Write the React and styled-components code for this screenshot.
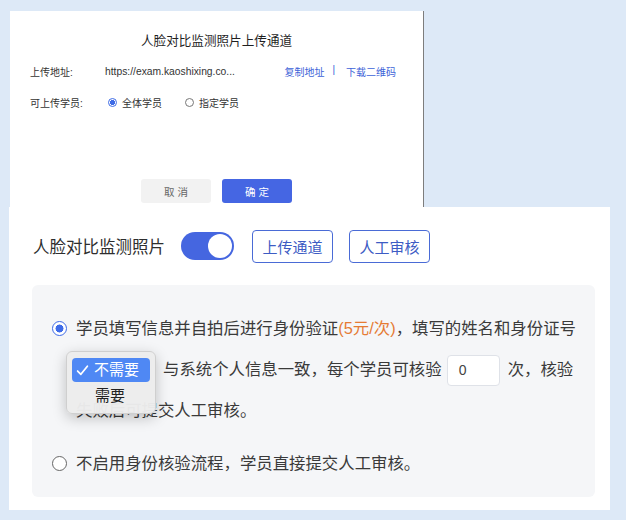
import React from "react";
import styled, { createGlobalStyle } from "styled-components";

const GlobalStyle = createGlobalStyle`
  body {
    margin: 0;
    background: #dde9f7;
    font-family: "Liberation Sans", "Noto Sans CJK SC", sans-serif;
    color: #333;
  }
`;

export default function App() {
  return (
    <>
      <GlobalStyle />
      <Page>
        <Modal>
          <ModalTitle>人脸对比监测照片上传通道</ModalTitle>
          <FieldRow>
            <FieldLabel>上传地址:</FieldLabel>
            <FieldValue>https://exam.kaoshixing.co...</FieldValue>
            <LinkGroup>
              <TextLink>复制地址</TextLink>
              <Divider>|</Divider>
              <TextLink>下载二维码</TextLink>
            </LinkGroup>
          </FieldRow>
          <FieldRow>
            <FieldLabel>可上传学员:</FieldLabel>
            <SmallOption>
              <SmallRadio checked />
              全体学员
            </SmallOption>
            <SmallOption>
              <SmallRadio />
              指定学员
            </SmallOption>
          </FieldRow>
          <ModalFooter>
            <FooterButton>取 消</FooterButton>
            <FooterButton primary>确 定</FooterButton>
          </ModalFooter>
        </Modal>

        <Settings>
          <Header>
            <HeaderTitle>人脸对比监测照片</HeaderTitle>
            <Toggle>
              <Knob />
            </Toggle>
            <OutlineButton>上传通道</OutlineButton>
            <OutlineButton>人工审核</OutlineButton>
          </Header>

          <Panel>
            <Option>
              <Radio checked />
              <OptionText>
                学员填写信息并自拍后进行身份验证<Price>(5元/次)</Price>，填写的姓名和身份证号
                <br />
                <SelectWrap>
                  <SelectBox />
                  <Popup>
                    <PopupItem selected>
                      <Check viewBox="0 0 12 12">
                        <polyline points="1.5,6.5 4.5,9.5 10.5,2" />
                      </Check>
                      不需要
                    </PopupItem>
                    <PopupItem>需要</PopupItem>
                  </Popup>
                </SelectWrap>
                与系统个人信息一致，每个学员可核验
                <CountInput>0</CountInput>
                次，核验
                <br />
                失败后可提交人工审核。
              </OptionText>
            </Option>
            <Option spaced>
              <Radio />
              <OptionText>不启用身份核验流程，学员直接提交人工审核。</OptionText>
            </Option>
          </Panel>
        </Settings>
      </Page>
    </>
  );
}

const Page = styled.div`
  padding-top: 11px;
`;

const Modal = styled.div`
  margin-left: 10px;
  width: 414px;
  height: 196px;
  box-sizing: border-box;
  background: #fff;
  border-right: 1px solid #7d7d7d;
  padding: 21px 20px 4px 20px;
  display: flex;
  flex-direction: column;
`;

const ModalTitle = styled.div`
  font-size: 12.6px;
  line-height: 18px;
  color: #1f1f1f;
  text-align: center;
  margin-bottom: 11px;
`;

const FieldRow = styled.div`
  display: flex;
  align-items: center;
  height: 20px;
  font-size: 10px;
  margin-bottom: 11px;
`;

const FieldLabel = styled.div`
  width: 75px;
  color: #333;
`;

const FieldValue = styled.div`
  color: #333;
  font-size: 10.3px;
`;

const LinkGroup = styled.div`
  margin-left: auto;
  margin-right: 7px;
  display: flex;
`;

const TextLink = styled.span`
  color: #3d63d8;
`;

const Divider = styled.span`
  color: #3d63d8;
  margin: 0 11px 0 8px;
`;

const SmallOption = styled.label`
  display: flex;
  align-items: center;
  gap: 5px;
  margin-left: 3px;
  margin-right: 20px;
  color: #333;
`;

const SmallRadio = styled.span`
  width: 9px;
  height: 9px;
  box-sizing: border-box;
  border-radius: 50%;
  border: 1px solid ${(p) => (p.checked ? "#3e6be6" : "#777")};
  background: ${(p) =>
    p.checked ? "radial-gradient(circle, #3e6be6 0 2.4px, #fff 2.6px)" : "#fff"};
`;

const ModalFooter = styled.div`
  margin-top: auto;
  display: flex;
  justify-content: center;
  gap: 11px;
`;

const FooterButton = styled.button`
  width: 70px;
  height: 24px;
  border: none;
  border-radius: 3px;
  font-family: inherit;
  font-size: 10.5px;
  background: ${(p) => (p.primary ? "#4566e3" : "#f2f2f2")};
  color: ${(p) => (p.primary ? "#fff" : "#666")};
`;

const Settings = styled.div`
  margin-left: 9px;
  width: 601px;
  height: 303px;
  box-sizing: border-box;
  background: #fff;
  padding: 22px 15px 13px 23px;
  display: flex;
  flex-direction: column;
`;

const Header = styled.div`
  display: flex;
  align-items: center;
  height: 34px;
  padding-left: 1px;
`;

const HeaderTitle = styled.div`
  font-size: 16.5px;
  color: #2e2e2e;
  margin-right: 16px;
`;

const Toggle = styled.div`
  width: 53px;
  height: 28px;
  border-radius: 14px;
  background: #4566e0;
  display: flex;
  align-items: center;
  justify-content: flex-end;
  padding: 0 2px;
  box-sizing: border-box;
  margin-right: 18px;
`;

const Knob = styled.div`
  width: 24px;
  height: 24px;
  border-radius: 50%;
  background: #fff;
`;

const OutlineButton = styled.button`
  width: 81px;
  height: 33px;
  box-sizing: border-box;
  border: 1px solid #4a6bd6;
  border-radius: 4px;
  background: #fff;
  color: #3d5cc4;
  font-family: inherit;
  font-size: 15px;
  margin-right: 16px;
`;

const Panel = styled.div`
  margin-top: 22px;
  flex: 1;
  background: #f5f6f8;
  border-radius: 6px;
  padding: 23px 20px 0 20px;
`;

const Option = styled.div`
  display: flex;
  align-items: flex-start;
  gap: 9px;
  margin-top: ${(p) => (p.spaced ? "12px" : "0")};
`;

const Radio = styled.span`
  flex: none;
  width: 15px;
  height: 15px;
  box-sizing: border-box;
  margin-top: 13px;
  border-radius: 50%;
  border: 1.5px solid ${(p) => (p.checked ? "#3e6be8" : "#666")};
  background: ${(p) =>
    p.checked ? "radial-gradient(circle, #3e6be8 0 3.8px, #fff 4.2px)" : "#fff"};
`;

const OptionText = styled.div`
  font-size: 16.4px;
  line-height: 41px;
  color: #3a3a3a;
  white-space: nowrap;
`;

const Price = styled.span`
  color: #e57b34;
`;

const SelectWrap = styled.span`
  position: relative;
  display: inline-block;
  width: 76px;
  height: 31px;
  vertical-align: middle;
  margin-right: 11px;
`;

const SelectBox = styled.span`
  display: block;
  width: 100%;
  height: 100%;
  box-sizing: border-box;
  border: 1px solid #c9d6ea;
  border-radius: 4px;
  background: #fff;
`;

const Popup = styled.div`
  position: absolute;
  left: -10px;
  top: -4px;
  width: 90px;
  box-sizing: border-box;
  padding: 6px 5px 5px;
  display: flex;
  flex-direction: column;
  gap: 2px;
  background: rgba(236, 236, 236, 0.97);
  border: 1px solid #cfcfcf;
  border-radius: 6px;
  box-shadow: 0 4px 14px rgba(0, 0, 0, 0.22);
`;

const PopupItem = styled.div`
  display: flex;
  align-items: center;
  height: 24px;
  padding-left: ${(p) => (p.selected ? "4px" : "23px")};
  gap: 5px;
  border-radius: 4px;
  font-size: 15px;
  line-height: 24px;
  background: ${(p) => (p.selected ? "#4f88f4" : "transparent")};
  color: ${(p) => (p.selected ? "#fff" : "#222")};
`;

const Check = styled.svg`
  width: 13px;
  height: 13px;
  fill: none;
  stroke: #fff;
  stroke-width: 1.6;
  stroke-linecap: round;
  stroke-linejoin: round;
`;

const CountInput = styled.span`
  display: inline-block;
  width: 53px;
  height: 31px;
  box-sizing: border-box;
  vertical-align: middle;
  margin: 0 8px 0 5px;
  padding-left: 11px;
  border: 1px solid #dfe2e8;
  border-radius: 4px;
  background: #fff;
  font-size: 14px;
  line-height: 29px;
  color: #444;
`;
